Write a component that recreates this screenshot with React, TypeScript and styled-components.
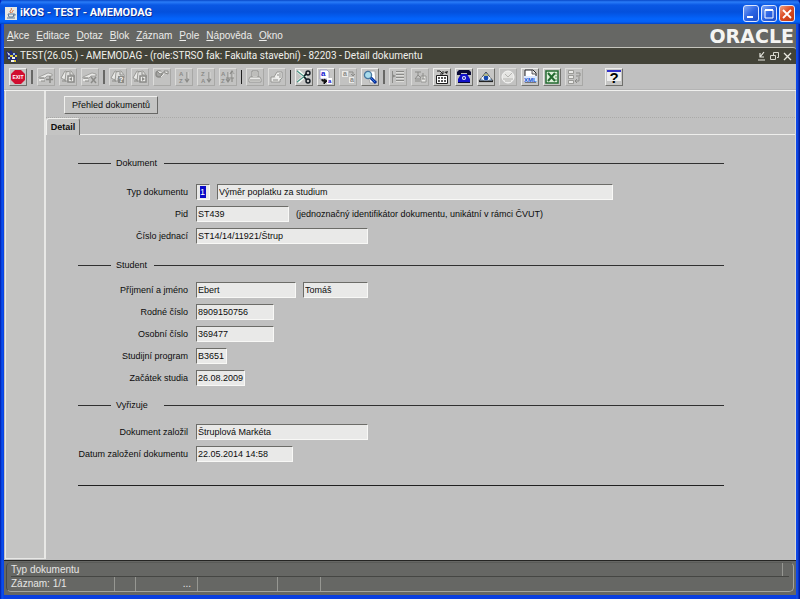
import React from "react";
import styled, { createGlobalStyle } from "styled-components";

const GlobalStyle = createGlobalStyle`
  * { box-sizing: border-box; }
  body { margin: 0; font-family: "Liberation Sans", Arial, sans-serif; font-size: 9px; color: #0c0c0c; }
  button, input { font: inherit; color: inherit; }
`;

const Window = styled.div`
  min-height: 100vh;
  display: flex;
  flex-direction: column;
  background: linear-gradient(90deg, #0019a8 0, #0a52f0 2px, #0a3fe0 4px, #0a3fe0 calc(100% - 4px), #1250f0 calc(100% - 3px), #00138c 100%);
`;
const TitleBar = styled.header`
  height: 24px;
  display: flex;
  align-items: center;
  gap: 3px;
  padding: 2px 5px 0 5px;
  border-radius: 5px 5px 0 0;
  background: linear-gradient(#0848c8 0, #2a7cf8 2px, #0a58e4 5px, #0450dc 12px, #0464fc 19px, #0460f4 22px, #0340c0 24px);
`;
const Title = styled.h1`
  margin: 0;
  flex: 1;
  font: bold 11px/14px Roboto, sans-serif;
  color: #fff;
  text-shadow: 1px 1px 0 #0a2a90;
`;
const CaptionGroup = styled.div`
  display: flex;
  gap: 2px;
`;
const CaptionButton = styled.button<{ $close?: boolean }>`
  width: 16px;
  height: 17px;
  padding: 0;
  border: 1px solid #dce6ff;
  border-radius: 3px;
  background: ${(p) => (p.$close ? "linear-gradient(135deg, #f0a080, #dc4c24 45%, #c03810)" : "linear-gradient(135deg, #7ca4f4, #2c64e4 50%, #1c4cc8)")};
  svg { display: block; width: 14px; height: 15px; }
`;
const Client = styled.div`
  flex: 1;
  display: flex;
  flex-direction: column;
  margin: 0 4px 4px;
  background: #666764;
`;
const MenuBar = styled.nav`
  height: 23px;
  display: flex;
  align-items: center;
  gap: 7px;
  padding: 0 2px 0 3px;
`;
const MenuItem = styled.button`
  padding: 0;
  border: 0;
  background: none;
  color: #ececea;
  font-size: 10px;
  line-height: 14px;
`;
const Brand = styled.span`
  margin-left: auto;
  font: bold 19px/20px "DejaVu Sans", sans-serif;
  color: #f4f4f2;
`;
const DocumentBar = styled.div`
  height: 17px;
  display: flex;
  align-items: center;
  gap: 2px;
  padding: 0 3px 0 2px;
  border-top: 1px solid #c4c4bc;
  border-radius: 0 3px 0 0;
  background: #434338;
  color: #f0f0ec;
  svg { display: block; }
`;
const DocumentTitle = styled.h2`
  margin: 0;
  flex: 1;
  font: normal 10px/14px Roboto, sans-serif;
  white-space: nowrap;
`;
const DocumentButton = styled.button`
  width: 11px;
  height: 11px;
  padding: 0;
  border: 0;
  background: none;
`;
const Toolbar = styled.div`
  height: 26px;
  display: flex;
  align-items: center;
  gap: 4px;
  padding: 0 5px;
  background: #c0c0c0;
  border-bottom: 1px solid #b4b4b4;
`;
const ToolButton = styled.button`
  flex: none;
  width: 18px;
  height: 18px;
  padding: 0;
  border: 1px solid;
  border-color: #eeeeec #70706c #70706c #eeeeec;
  background: #c6c6c5;
  svg { display: block; width: 16px; height: 16px; }
  &:disabled { border-color: #dcdcda #a8a8a6 #a8a8a6 #dcdcda; background: #c2c2c1; }
`;
const Divider = styled.span<{ $heavy?: boolean }>`
  flex: none;
  width: ${(p) => (p.$heavy ? 2 : 1)}px;
  height: 14px;
  background: ${(p) => (p.$heavy ? "#686866" : "#202020")};
`;
const Gap = styled.span<{ $width: number }>`
  width: ${(p) => p.$width}px;
`;
const Workspace = styled.main`
  flex: 1;
  display: flex;
  background: #c0c0c0;
  border-top: 1px solid #f0f0ee;
`;
const SidePanel = styled.aside`
  width: 41px;
  margin: 0 0 1px 1px;
  border: 1px solid #e8e8e6;
  border-right-width: 2px;
  border-top: 0;
  background: #c4c4c3;
`;
const Canvas = styled.div`
  flex: 1;
  min-width: 0;
  border-right: 1px solid #d8d8d6;
`;
const ActionStrip = styled.div`
  height: 27px;
  padding: 5px 18px 0;
  border-bottom: 1px dotted #aaaaa8;
`;
const ActionButton = styled.button`
  width: 94px;
  height: 18px;
  padding: 0;
  border: 1px solid;
  border-color: #f0f0ee #686866 #686866 #f0f0ee;
  background: #c4c4c3;
`;
const TabStrip = styled.div`
  display: flex;
  height: 17px;
`;
const Tab = styled.button`
  width: 34px;
  padding: 0;
  border: 1px solid;
  border-color: #f0f0ee #70706e transparent #f0f0ee;
  border-bottom: 0;
  border-radius: 3px 3px 0 0;
  background: #c4c4c3;
  font-weight: bold;
`;
const TabRule = styled.span`
  flex: 1;
  border-bottom: 1px solid #eeeeec;
`;
const Form = styled.form`
  padding: 21px 71px 0 32px;
`;
const Section = styled.fieldset<{ $gap: number; $after: number }>`
  display: flex;
  flex-direction: column;
  gap: ${(p) => p.$gap}px;
  min-width: 0;
  margin: 0 0 ${(p) => p.$after}px;
  padding: 0;
  border: 0;
`;
const Heading = styled.div`
  display: flex;
  align-items: center;
  gap: 5px;
  height: 14px;
`;
const HeadingText = styled.span<{ $width: number }>`
  width: ${(p) => p.$width}px;
`;
const ShortRule = styled.span`
  width: 33px;
  height: 1px;
  background: #303030;
`;
const LongRule = styled.span`
  flex: 1;
  height: 1px;
  background: #303030;
`;
const EndRule = styled.hr`
  height: 1px;
  margin: 0;
  border: 0;
  background: #202020;
`;
const Rows = styled.div`
  display: grid;
  gap: 6px;
`;
const Row = styled.div`
  display: flex;
  align-items: center;
  gap: 7px;
  height: 16px;
  white-space: nowrap;
`;
const Label = styled.label`
  width: 111px;
  padding-right: 1px;
  text-align: right;
  line-height: 12px;
`;
const Field = styled.input<{ $width: number; $selected?: boolean }>`
  width: ${(p) => p.$width}px;
  height: 16px;
  padding: 0 0 1px 1px;
  border: 1px solid;
  border-color: #6c6c68 #f8f8f6 #f8f8f6 #6c6c68;
  border-radius: 0;
  outline: 0;
  background: #e9e9e8;
  ${(p) => p.$selected && "padding: 0 3px; color: #fff; background: linear-gradient(#0808c8, #0808c8) 3px 1px / 6px 12px no-repeat #e9e9e8;"}
`;
const Note = styled.span`
  line-height: 12px;
`;
const StatusArea = styled.footer`
  padding: 1px 2px 3px 2px;
  border-top: 1px solid #252523;
  color: #e6e6e4;
  font-size: 10px;
  line-height: 13px;
`;
const StatusPanel = styled.div`
  border: 1px solid;
  border-color: #5a5b58 #a4a5a0 #a4a5a0 #484946;
  border-radius: 5px;
`;
const StatusLine = styled.div`
  display: flex;
  height: 14px;
  margin: 0 4px 0 4px;
  &:first-child { border-bottom: 1px solid #454643; }
`;
const StatusCell = styled.span<{ $width?: number; $end?: boolean }>`
  ${(p) => (p.$width ? `width: ${p.$width}px;` : "flex: 1;")}
  text-align: ${(p) => (p.$end ? "right" : "left")};
  padding-right: 6px;
  border-right: 1px solid #969792;
`;

const G = "#8b8b88";
const W = "#e9e9e7";

const Glyph = ({ x, y, s = 6, c = G, children }: { x: number; y: number; s?: number; c?: string; children: string }) => (
  <text x={x} y={y} fontSize={s} fontWeight="bold" fill={c} fontFamily="Liberation Sans">{children}</text>
);
const Card = () => (
  <>
    <path d="M1 8l9-4 4 1v2H9l-2 2H1z" fill={W} stroke={G} strokeWidth=".7" />
    <path d="M1 10h5v2H1z" fill={W} />
    <path d="M2 9h4M3 12h4" fill="none" stroke={G} />
  </>
);
const Sheets = () => (
  <>
    <path d="M1 9l4-7 3 1-3 8z" fill={W} stroke={G} strokeWidth=".8" />
    <path d="M6 3l5-1 3 4v3H8v3H5z" fill="#dededc" stroke={G} strokeWidth=".8" />
    <path d="M10 3v3h3M2 12h4" stroke={G} fill="none" />
  </>
);
const Arrow = ({ x, up }: { x: number; up?: boolean }) => (
  <>
    <path d={`M${x} 3v10M${x - 2} ${up ? 5 : 10}l2 ${up ? -3 : 3} 2 ${up ? 3 : -3}`} fill="none" stroke={G} strokeWidth="1.2" />
    <path d={`M${x + 1} 3v6`} stroke={W} strokeWidth=".6" />
  </>
);

const icons: Record<string, React.ReactNode> = {
  exit: (<><path d="M5 1h6l4 4v6l-4 4H5l-4-4V5z" fill="#d10e30" /><text x="8" y="10" fontSize="5" fontWeight="bold" fill="#fff" textAnchor="middle" fontFamily="Liberation Sans">EXIT</text></>),
  insert: (<><Card /><path d="M12 7v7M8 10.500h7" stroke={G} strokeWidth="1.600" /></>),
  duplicate: (<><Sheets /><path d="M8 7h6v6H8z" fill={W} stroke={G} strokeWidth="1.500" /><path d="M12 8v4l-3-2z" fill={G} /></>),
  remove: (<><Card /><path d="M9 8l5 6M14 8l-5 6" stroke={G} strokeWidth="1.500" /></>),
  query: (<><Sheets /><path d="M8 7h6v7H8z" fill={G} /><Glyph x={9} y={13} s={7} c="#fff">?</Glyph></>),
  run: (<><Sheets /><path d="M8 7h6v6H8z" fill={W} stroke={G} strokeWidth="1.500" /><path d="M10 8v4l3-2z" fill={G} /></>),
  cancel: (<><circle cx="5" cy="5" r="3" fill="#a5a5a3" stroke={G} strokeWidth="1.500" /><path d="M3 2l3 3 4-2M10 2h4v3l-3-1z" fill={W} stroke={G} /><path d="M7 8l3-3" stroke={W} /></>),
  sortUp: (<><Glyph x={3} y={7}>A</Glyph><Glyph x={3} y={14}>Z</Glyph><Arrow x={11} /></>),
  sortDown: (<><Glyph x={3} y={7}>Z</Glyph><Glyph x={3} y={14}>A</Glyph><Arrow x={11} /></>),
  sortBoth: (<><Glyph x={1} y={7}>A</Glyph><Glyph x={1} y={14}>Z</Glyph><Arrow x={8} /><Arrow x={12} up /><path d="M6 9h8" stroke={G} /></>),
  print: (<><path d="M5 8V2h6v6" fill="#f0f0ee" stroke={G} /><path d="M3 8h10l1 2v3H2v-3z" fill={W} stroke={G} strokeWidth=".8" /><path d="M6 4h4M6 6h4M3 11h10" stroke={G} /></>),
  preview: (<><path d="M2 8h9v5H2z" fill={W} stroke={G} strokeWidth=".8" /><path d="M5 8l3-5h5v6l-2 2" fill="#f0f0ee" stroke={G} strokeWidth=".8" /><path d="M4 11h5M8 6h2M11 4v5" stroke={G} /></>),
  cut: (<><path d="M2 2l8 7M2 13l8-7" stroke="#f8fff8" strokeWidth="3" /><path d="M1 2l9 7M1 13l9-7" stroke="#4d9486" strokeWidth="1.200" /><path d="M8 7l3-3M8 8l3 3" stroke="#101820" strokeWidth="1.600" /><circle cx="12" cy="4" r="2" fill="#c6c6c5" stroke="#101820" strokeWidth="1.400" /><circle cx="12" cy="12" r="2" fill="#c6c6c5" stroke="#101820" strokeWidth="1.400" /></>),
  copy: (<><path d="M2 1h7l2 2v7H2z" fill="#fff" stroke="#8888c0" strokeWidth=".7" /><Glyph x={3} y={7} s={8} c="#1414d0">a</Glyph><path d="M9 9h5v6H9z" fill="#fff" /><Glyph x={10} y={14} s={6} c="#1414d0">a</Glyph><path d="M4 10v2h3M6 10l3 2-3 3z" fill="#111" stroke="#111" /></>),
  paste: (<><path d="M2 2h6v6H2zM9 8h5v6H9z" fill={W} /><Glyph x={3} y={7} s={7}>a</Glyph><Glyph x={10} y={13} s={7}>a</Glyph><path d="M9 3h4v4M11 5l2 2 2-2" fill="none" stroke={G} /></>),
  find: (<><path d="M5 2h8l1 12H8z" fill="#fff" stroke="#aaa" /><path d="M8 8l6 6" stroke="#062c98" strokeWidth="3" /><path d="M8 8l5 5" stroke="#2878e0" /><circle cx="6" cy="6" r="3.600" fill="#a8dcec" stroke="#4878a0" strokeWidth="1.300" /></>),
  list: (<><path d="M6 2.500h8M6 5.500h8M6 8.500h8M6 11.500h8M2.500 2v12" stroke={G} /><path d="M6 3.500h8M6 6.500h8M6 9.500h8M6 12.500h8" stroke={W} strokeWidth=".7" /><path d="M2 5l4 2-4 2z" fill={G} /></>),
  edit: (<><path d="M3 3h6M6 3v3l-3 4h7L6 6M3 12h5" stroke={G} fill="none" /><path d="M9 7h5v6H9z" fill={W} stroke={G} strokeWidth=".8" /><path d="M11 4v6M10 10h3" stroke={G} /></>),
  importData: (<><path d="M2.500 6.500h11v8h-11z" fill="#fff" stroke="#1c1c1c" /><path d="M4 9h2M7 9h2M10 9h2M4 12h2M7 12h2M10 12h2" stroke="#222" strokeWidth="1.300" /><path d="M3 2h3l3 3M9 2v3H6" fill="none" stroke="#222" /><path d="M10 3l4-1-1 3z" fill="#222" /></>),
  phone: (<><path d="M1 6V3l2-2h10l2 2v3h-4V4H5v2z" fill="#0b0b35" /><path d="M5 5h6l3 5v3H2v-3z" fill="#1212c8" /><path d="M2 13h12v1H2z" fill="#090935" /><circle cx="8" cy="9" r="2" fill="#ecefff" /><circle cx="8" cy="9" r="1" fill="#2020a0" /></>),
  eye: (<><path d="M8 3l7 9H1z" fill="#93b4d6" stroke="#333" strokeWidth=".8" /><path d="M3 9q5-5 10 0-5 5-10 0" fill="#fff" /><circle cx="8" cy="9" r="2.400" fill="#1548b0" /><path d="M1 12.500h14" stroke="#222" strokeWidth="1.200" /><path d="M6 6h4" stroke="#d8c848" /></>),
  check: (<><circle cx="8" cy="8" r="6" fill="#e5e5e3" stroke="#f5f5f4" /><path d="M5 5l3 3 4-4M3 10h10M5 12h6" fill="none" stroke="#b4b4b1" /></>),
  xml: (<><path d="M3 1h8l3 3v9H3z" fill="#fff" stroke="#27272b" /><path d="M10 1v4h4" fill="#ddd" stroke="#27272b" strokeWidth=".7" /><path d="M2 7h13v6H2z" fill="#dbe8ff" /><Glyph x={2} y={13} s={6} c="#1450cc">XML</Glyph></>),
  excel: (<><path d="M2 2h12v12H2z" fill="#dff0dc" stroke="#246b31" strokeWidth="1.500" /><path d="M4 4l7 8M11 4l-7 8" stroke="#246b31" strokeWidth="2" /><path d="M11 5h2M11 8h2M11 11h2" stroke="#57905c" /></>),
  tree: (<><path d="M2.500 1.500h5v3h-5zM2.500 6.500h5v3h-5zM2.500 11.500h5v3h-5z" fill={W} stroke={G} strokeWidth=".8" /><path d="M10 4h4v3h-4M13 8v4H9M11 10l-2 2 2 2" fill="none" stroke={G} /></>),
  help: (<><path d="M1 3h14v9H1z" fill="#eee" /><path d="M1 2h14" stroke="#1717c8" strokeWidth="1.700" /><text x="8" y="14" fontSize="15" fontWeight="bold" textAnchor="middle" fontFamily="Liberation Sans">?</text></>),
};

type Tool = [name: string, label: string, enabled?: boolean];
const toolGroups: Tool[][] = [
  [["exit", "Konec", true]],
  [["insert", "Vložit záznam"], ["duplicate", "Kopírovat záznam"], ["remove", "Smazat záznam"]],
  [["query", "Zadat dotaz"], ["run", "Provést dotaz"], ["cancel", "Zrušit dotaz"], ["sortUp", "Řadit vzestupně"], ["sortDown", "Řadit sestupně"], ["sortBoth", "Řadit"]],
  [["print", "Tisk"], ["preview", "Náhled"]],
  [["cut", "Vyjmout", true], ["copy", "Kopírovat", true], ["paste", "Vložit"], ["find", "Hledat", true]],
  [["list", "Seznam"], ["edit", "Editor"], ["importData", "Import", true], ["phone", "Kontakty", true], ["eye", "Zobrazit", true], ["check", "Kontrola"], ["xml", "XML", true], ["excel", "Excel", true], ["tree", "Strom"]],
];
const menus = ["Akce", "Editace", "Dotaz", "Blok", "Záznam", "Pole", "Nápověda", "Okno"];

type Entry = { id: string; label: string; fields: { value: string; width: number; selected?: boolean }[]; note?: string };
type Group = { title: string; width: number; gap: number; after: number; rows: Entry[] };
const groups: Group[] = [
  { title: "Dokument", width: 43, gap: 14, after: 14, rows: [
    { id: "typ", label: "Typ dokumentu", fields: [{ value: "1", width: 14, selected: true }, { value: "Výměr poplatku za studium", width: 396 }] },
    { id: "pid", label: "Pid", fields: [{ value: "ST439", width: 93 }], note: "(jednoznačný identifikátor dokumentu, unikátní v rámci ČVUT)" },
    { id: "cj", label: "Číslo jednací", fields: [{ value: "ST14/14/11921/Štrup", width: 172 }] },
  ] },
  { title: "Student", width: 33, gap: 10, after: 12, rows: [
    { id: "jmeno", label: "Příjmení a jméno", fields: [{ value: "Ebert", width: 100 }, { value: "Tomáš", width: 65 }] },
    { id: "rc", label: "Rodné číslo", fields: [{ value: "8909150756", width: 78 }] },
    { id: "oc", label: "Osobní číslo", fields: [{ value: "369477", width: 78 }] },
    { id: "program", label: "Studijní program", fields: [{ value: "B3651", width: 31 }] },
    { id: "zacatek", label: "Začátek studia", fields: [{ value: "26.08.2009", width: 49 }] },
  ] },
  { title: "Vyřizuje", width: 43, gap: 12, after: 23, rows: [
    { id: "zalozil", label: "Dokument založil", fields: [{ value: "Štruplová Markéta", width: 172 }] },
    { id: "datum", label: "Datum založení dokumentu", fields: [{ value: "22.05.2014 14:58", width: 97 }] },
  ] },
];

const ToolIcon = ({ name }: { name: string }) => <svg viewBox="0 0 16 16" aria-hidden="true">{icons[name]}</svg>;

export default function App() {
  return (
    <>
      <GlobalStyle />
      <Window>
        <TitleBar>
          <svg width="12" height="13" viewBox="0 0 12 13"><path d="M0 0h12v13H0z" fill="#e8e8e4" /><path d="M6 1c2 2-3 3 0 5M8 3c1 1-2 2-1 3" fill="none" stroke="#d8642c" /><path d="M3 7h6l-1 3H4zM9 7c2 0 2 2-1 2M2 11h8" fill="none" stroke="#5b7899" /></svg>
          <Title>iKOS - TEST - AMEMODAG</Title>
          <CaptionGroup>
            <CaptionButton aria-label="Minimalizovat"><svg viewBox="0 0 14 15"><path d="M3 10h6v2H3z" fill="#fff" /></svg></CaptionButton>
            <CaptionButton aria-label="Maximalizovat"><svg viewBox="0 0 14 15"><path d="M3 4h8v8H3z" fill="none" stroke="#fff" /><path d="M3 4h8" stroke="#fff" strokeWidth="2" /></svg></CaptionButton>
            <CaptionButton $close aria-label="Zavřít"><svg viewBox="0 0 14 15"><path d="M3 4l8 8M11 4l-8 8" stroke="#fff" strokeWidth="1.800" /></svg></CaptionButton>
          </CaptionGroup>
        </TitleBar>
        <Client>
          <MenuBar>
            {menus.map((m) => <MenuItem key={m}><u>{m[0]}</u>{m.slice(1)}</MenuItem>)}
            <Brand>ORACLE</Brand>
          </MenuBar>
          <DocumentBar>
            <svg width="12" height="13" viewBox="0 0 12 13"><path d="M0 1l3 1 2-2 2 3h4v8l-3 2-3-2-4-2z" fill="#222a78" /><path d="M1 2l3 2-1 2zM6 7h3v2H6zM5 10h3v2H5z" fill="#f2f2e8" /><path d="M4 5h3v2H4zM9 5h2v2H9zM8 10h2v2H8z" fill="#dcca38" /><path d="M2 7h2v2H2zM7 3h2v2H7z" fill="#8ebaf0" /></svg>
            <DocumentTitle>TEST(26.05.) - AMEMODAG - (role:STRSO fak: Fakulta stavební) - 82203 - Detail dokumentu</DocumentTitle>
            <DocumentButton aria-label="Minimalizovat dokument"><svg width="11" height="11" viewBox="0 0 11 11"><path d="M8 1L4 6M4 2v4h4M2 9h7" fill="none" stroke="#e8e8e0" strokeWidth="1.200" /></svg></DocumentButton>
            <DocumentButton aria-label="Obnovit dokument"><svg width="11" height="11" viewBox="0 0 11 11"><path d="M4.500 4V1.500h5v5H8M1.500 4.500h5v4h-5z" fill="none" stroke="#d8d8d0" /></svg></DocumentButton>
            <DocumentButton aria-label="Zavřít dokument"><svg width="11" height="11" viewBox="0 0 11 11"><path d="M2 2l7 7M9 2L2 9" stroke="#e8e8e0" strokeWidth="1.300" /></svg></DocumentButton>
          </DocumentBar>
          <Toolbar role="toolbar">
            {toolGroups.map((tools, i) => (
              <React.Fragment key={i}>
                {i > 0 && <Divider $heavy={i === 1 || i === 2 || i === 5} />}
                {tools.map(([name, label, enabled]) => (
                  <ToolButton key={name} type="button" aria-label={label} disabled={!enabled}><ToolIcon name={name} /></ToolButton>
                ))}
              </React.Fragment>
            ))}
            <Gap $width={14} />
            <ToolButton type="button" aria-label="Nápověda"><ToolIcon name="help" /></ToolButton>
          </Toolbar>
          <Workspace>
            <SidePanel />
            <Canvas>
              <ActionStrip><ActionButton type="button">Přehled dokumentů</ActionButton></ActionStrip>
              <TabStrip role="tablist"><Tab role="tab" aria-selected="true">Detail</Tab><TabRule /></TabStrip>
              <Form>
                {groups.map((g) => (
                  <Section key={g.title} aria-label={g.title} $gap={g.gap} $after={g.after}>
                    <Heading><ShortRule /><HeadingText $width={g.width}>{g.title}</HeadingText><LongRule /></Heading>
                    <Rows>
                      {g.rows.map((r) => (
                        <Row key={r.id}>
                          <Label htmlFor={r.id}>{r.label}</Label>
                          {r.fields.map((f, i) => (
                            <Field key={i} id={i === 0 ? r.id : undefined} aria-label={i > 0 ? r.label : undefined} defaultValue={f.value} $width={f.width} $selected={f.selected} />
                          ))}
                          {r.note && <Note>{r.note}</Note>}
                        </Row>
                      ))}
                    </Rows>
                  </Section>
                ))}
                <EndRule />
              </Form>
            </Canvas>
          </Workspace>
          <StatusArea>
            <StatusPanel>
              <StatusLine><StatusCell>Typ dokumentu</StatusCell><Gap $width={6} /></StatusLine>
              <StatusLine>
                <StatusCell $width={104}>Záznam: 1/1</StatusCell>
                <StatusCell $width={21} />
                <StatusCell $width={62} $end>...</StatusCell>
                <StatusCell $width={80} />
                <StatusCell $width={43} />
              </StatusLine>
            </StatusPanel>
          </StatusArea>
        </Client>
      </Window>
    </>
  );
}
